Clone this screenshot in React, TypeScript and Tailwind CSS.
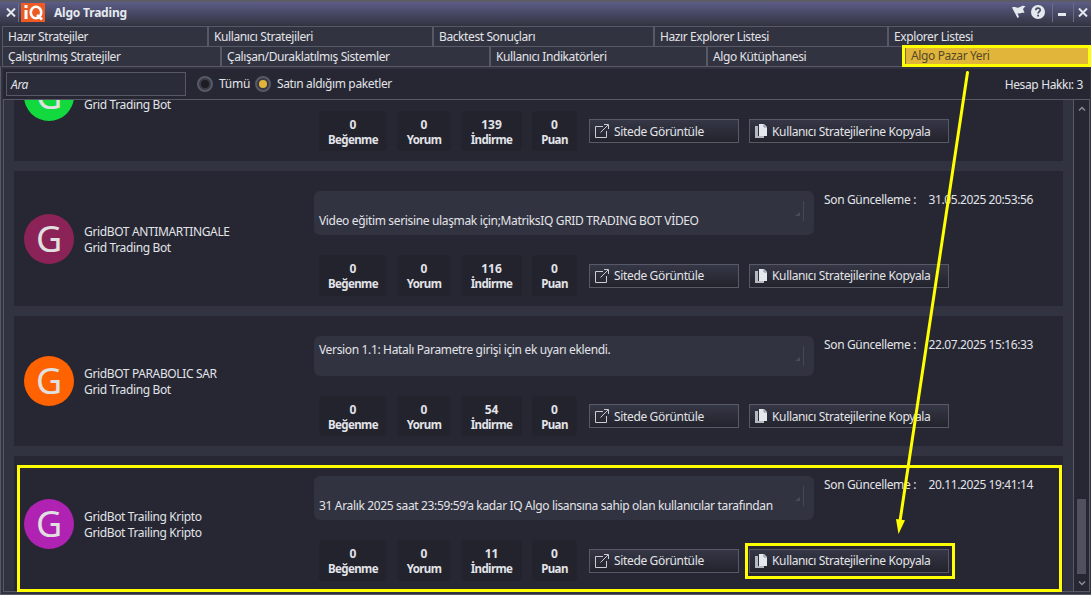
import { ReactNode } from 'react'
import clsx from 'clsx'

const topTabs = [
  { label: 'Hazır Stratejiler', width: 'w-[206px] border-r-2' },
  { label: 'Kullanıcı Stratejileri', width: 'w-[225px] border-r-2' },
  { label: 'Backtest Sonuçları', width: 'w-[221px] border-r-2' },
  { label: 'Hazır Explorer Listesi', width: 'w-[234px] border-r-2' },
  { label: 'Explorer Listesi', width: 'flex-1' },
]

const bottomTabs = [
  { label: 'Çalıştırılmış Stratejiler', width: 'w-[219px] border-r-2' },
  { label: 'Çalışan/Duraklatılmış Sistemler', width: 'w-[269px] border-r-2' },
  { label: 'Kullanıcı Indikatörleri', width: 'w-[217px] border-r-2' },
  { label: 'Algo Kütüphanesi', width: 'w-[194px]' },
]

type Bot = {
  id: number
  name: string
  group: string
  color: string
  description: string
  downloads: string
  updated: string
  tall: boolean
}

const bots: Bot[] = [
  {
    id: 1,
    name: '',
    group: 'Grid Trading Bot',
    color: 'bg-[#12d93e]',
    description: '',
    downloads: '139',
    updated: '',
    tall: false,
  },
  {
    id: 2,
    name: 'GridBOT ANTIMARTINGALE',
    group: 'Grid Trading Bot',
    color: 'bg-[#8c2358]',
    description: 'Video eğitim serisine ulaşmak için;MatriksIQ GRID TRADING BOT VİDEO',
    downloads: '116',
    updated: '31.05.2025 20:53:56',
    tall: true,
  },
  {
    id: 3,
    name: 'GridBOT PARABOLIC SAR',
    group: 'Grid Trading Bot',
    color: 'bg-[#ff6200]',
    description: 'Version 1.1: Hatalı Parametre girişi için ek uyarı eklendi.',
    downloads: '54',
    updated: '22.07.2025 15:16:33',
    tall: false,
  },
  {
    id: 4,
    name: 'GridBot Trailing Kripto',
    group: 'GridBot Trailing Kripto',
    color: 'bg-[#b022b2]',
    description: '31 Aralık 2025 saat 23:59:59’a kadar IQ Algo lisansına sahip olan kullanıcılar tarafından',
    downloads: '11',
    updated: '20.11.2025 19:41:14',
    tall: true,
  },
]

function TitleBar() {
  return (
    <div className="flex h-[23px] shrink-0 items-center bg-linear-to-b from-[#5c5c87] to-[#343543] text-[#e4e9ee]">
      <svg className="mb-[2px] ml-[6px]" width="10" height="9" viewBox="0 0 10 9">
        <path d="M1 .5 9 8.5M9 .5 1 8.5" stroke="currentColor" strokeWidth="2" />
      </svg>
      <div className="mb-[3px] ml-[2px] h-[19px] w-px bg-[#6c6c84]" />
      <div className="mb-[3px] ml-[2px] flex h-[19px] w-6 items-center justify-center bg-[#ee5a24]">
        <svg width="21" height="17" viewBox="0 0 21 17" fill="none" stroke="#fff">
          <path d="M3 6v9" strokeWidth="3" />
          <path d="M1.5 2.5h3" strokeWidth="3" />
          <ellipse cx="13" cy="8.5" rx="5.2" ry="5.7" strokeWidth="2.6" />
          <path d="m14 11 5 4.5" strokeWidth="2.6" />
        </svg>
      </div>
      <span className="mb-[2px] ml-[9px] text-[12px] font-bold leading-none tracking-[-0.2px]">Algo Trading</span>
      <div className="ml-auto flex h-full items-center">
        <svg className="mb-[3px]" width="14" height="14" viewBox="0 0 14 14" fill="currentColor">
          <path d="M0 2.5C3 1 5 4 8 2s4-1 5.500-1L11 4l1.500 4C9 7 9 9.500 5.500 8L7 12l-1.500 1Z" />
        </svg>
        <svg className="mb-[3px] ml-[5px]" width="14" height="14" viewBox="0 0 14 14">
          <circle cx="7" cy="7" r="7" fill="currentColor" />
          <path d="M4.800 5.300C4.900 2.500 9.300 2.600 9.200 5.100 9.100 6.700 7.100 6.600 7.100 8.600" fill="none" stroke="#484963" strokeWidth="1.700" />
          <path d="M6.200 9.800h1.800v1.700H6.200z" fill="#484963" />
        </svg>
        <div className="mb-[3px] ml-[7px] h-[19px] w-px bg-[#6c6c84]" />
        <div className="ml-[5px] mt-[2px] h-[3px] w-2 bg-[#e4e9ee]" />
        <div className="mb-[3px] ml-[7px] h-[19px] w-px bg-[#6c6c84]" />
        <svg className="mb-[2px] ml-[4px] mr-[3px]" width="10" height="9" viewBox="0 0 10 9">
          <path d="M1 .5 9 8.5M9 .5 1 8.5" stroke="currentColor" strokeWidth="2" />
        </svg>
      </div>
    </div>
  )
}

function Tab({ label, width }: { label: string; width: string }) {
  return (
    <div className={clsx('flex h-[19px] shrink-0 items-center border-[#585966] pl-[5px] pt-px tracking-[-0.4px]', width)}>
      {label}
    </div>
  )
}

function Radio({ checked }: { checked?: boolean }) {
  return (
    <div className="flex size-4 items-center justify-center rounded-full border-2 border-[#585966] bg-[#383947]">
      <div className={clsx('size-2 rounded-full', checked ? 'bg-[#e0b53a]' : 'bg-[#1c1c22]')} />
    </div>
  )
}

function Stat({ value, label, width }: { value: string; label: string; width: string }) {
  return (
    <div className={clsx('flex h-full flex-col items-center justify-center rounded bg-[#23232e] pt-px font-bold leading-[15px]', width)}>
      <span className="text-[12px] tracking-normal">{value}</span>
      <span className="whitespace-nowrap text-[11.500px] tracking-[-0.6px]">{label}</span>
    </div>
  )
}

function Button({ width, icon, children }: { width: string; icon: ReactNode; children: ReactNode }) {
  return (
    <button
      className={clsx(
        'flex h-6 items-center whitespace-nowrap border border-[#585966] bg-linear-to-b from-[#363746] to-[#23232d] pl-[5px] tracking-[-0.35px]',
        width,
      )}
    >
      {icon}
      <span className="pt-px">{children}</span>
    </button>
  )
}

function OpenIcon() {
  return (
    <svg className="mr-[5px]" width="14" height="14" viewBox="0 0 14 14" fill="none" stroke="#c9cdd3">
      <path d="M8 2.500H.500v11h11V7" />
      <path d="M5.500 8.500 13 1M9 .500h4.500V5" />
    </svg>
  )
}

function CopyIcon() {
  return (
    <svg className="mr-[4px]" width="13" height="14" viewBox="0 0 13 14">
      <path d="M0 2h3v10h6v2H0Z" fill="#b4b8c0" />
      <path d="M4 0h5l3 3v9H4Z" fill="#e4e9ee" />
      <path d="M9 0v3h3" fill="none" stroke="#8b8c97" />
    </svg>
  )
}

function BotCard({ bot }: { bot: Bot }) {
  return (
    <div className={clsx('flex shrink-0 bg-[#262733]', bot.tall ? 'h-[135px]' : 'h-[130px]')}>
      <div className="flex w-[300px] shrink-0 items-center pl-[10px]">
        <div className={clsx('flex size-[50px] shrink-0 items-center justify-center rounded-full text-[36px] leading-none text-[#e0e0e0]', bot.color)}>
          G
        </div>
        <div className="ml-[10px] pt-[2px] leading-4">
          <p className="min-h-4">{bot.name}</p>
          <p>{bot.group}</p>
        </div>
      </div>
      <div className="flex flex-1 flex-col pb-[10px] pt-5">
        <div className="flex">
          <div
            className={clsx(
              'flex w-[500px] shrink-0 justify-between rounded-md bg-[#323341] pl-[5px]',
              bot.tall ? 'h-[44px] pt-[22px]' : 'h-10 pt-[6px]',
            )}
          >
            <p className="whitespace-nowrap leading-4 tracking-[-0.345px]">{bot.description}</p>
            <div className={clsx('mr-[10px] flex h-5 w-[9px] items-center border-r border-[#474855]', bot.tall ? '-mt-[12px]' : 'mt-[4px]')}>
              <svg className="mt-[5px]" width="5" height="4" viewBox="0 0 5 4">
                <path d="M0 4 5 0v4Z" fill="#4a4b58" />
              </svg>
            </div>
          </div>
          <span className="ml-[10px] w-[104.5px] leading-[18px]">Son Güncelleme :</span>
          <span className="leading-[18px] tracking-[-0.4px]">{bot.updated}</span>
        </div>
        <div className="mt-5 flex min-h-0 flex-1 items-center gap-[10px] pl-[5px]">
          <Stat value="0" label="Beğenme" width="w-[68px]" />
          <Stat value="0" label="Yorum" width="w-[54px]" />
          <Stat value={bot.downloads} label="İndirme" width="w-[61px]" />
          <Stat value="0" label="Puan" width="w-[45px]" />
          <div className="ml-[2px] flex gap-[10px]">
            <Button width="w-[150px]" icon={<OpenIcon />}>
              Sitede Görüntüle
            </Button>
            <Button width="w-[200px]" icon={<CopyIcon />}>
              Kullanıcı Stratejilerine Kopyala
            </Button>
          </div>
        </div>
      </div>
    </div>
  )
}

function Scrollbar() {
  return (
    <div className="flex w-[16px] shrink-0 flex-col items-center border-l border-[#585966] bg-[#262733]">
      <svg className="mt-[6px]" width="8" height="5" viewBox="0 0 8 5" fill="none" stroke="#8a8b96" strokeWidth="1.500">
        <path d="M1 4.500 4 1.500 7 4.500" />
      </svg>
      <div className="mt-auto h-[75px] w-[9px] bg-[#50515f]" />
      <svg className="mb-[5px] mt-[7px]" width="8" height="5" viewBox="0 0 8 5" fill="none" stroke="#8a8b96" strokeWidth="1.500">
        <path d="M1 .500 4 3.500 7 .500" />
      </svg>
    </div>
  )
}

// Tutorial markings drawn over the window
function Annotations() {
  return (
    <>
      <div className="absolute left-[17px] top-[465px] h-[127px] w-[1045px] border-[3px] border-[#ffff00]" />
      <div className="absolute left-[745px] top-[543px] h-[36px] w-[210px] border-[3px] border-[#ffff00]" />
      <svg className="absolute left-0 top-0" width="1091" height="595" viewBox="0 0 1091 595">
        <path d="M967.500 72.500 900 521" stroke="#ffff00" strokeWidth="3" strokeLinecap="round" />
        <path d="m898.500 534-2.500-15 9 1.300Z" fill="#ffff00" />
      </svg>
    </>
  )
}

export default function App() {
  return (
    <div className="relative flex h-[595px] w-[1091px] flex-col overflow-hidden border-t-2 border-[#5c5c66] bg-[#323341] font-['Noto_Sans',sans-serif] text-[12px] tracking-[-0.36px] text-[#e2e4e8]">
      <TitleBar />
      <div className="ml-[2px] mt-px shrink-0 border-l border-t border-[#585966]">
        <div className="flex">
          {topTabs.map((tab) => (
            <Tab key={tab.label} {...tab} />
          ))}
        </div>
        <div className="flex h-[21px] border-y border-[#585966]">
          {bottomTabs.map((tab) => (
            <Tab key={tab.label} {...tab} />
          ))}
          <div className="z-10 -mt-[2px] flex h-[22px] flex-1 items-center border-[3px] border-[#ffff00] bg-[#e0b53a] text-[#55492c]">
            <div className="h-full w-px bg-[#7b6a3d]" />
            <span className="ml-[5px]">Algo Pazar Yeri</span>
          </div>
        </div>
      </div>
      <div className="ml-[3px] mr-px mt-[2px] flex h-[30px] shrink-0 items-center bg-[#262733]">
        <div className="ml-[3px] flex h-6 w-[180px] items-center border border-[#585966] bg-[#2b2c39] pl-1 pt-px italic">Ara</div>
        <div className="ml-[11px]">
          <Radio />
        </div>
        <span className="ml-[6px] w-[30px] whitespace-nowrap tracking-[-0.25px]">Tümü</span>
        <div className="ml-[6px]">
          <Radio checked />
        </div>
        <span className="ml-[6px]">Satın aldığım paketler</span>
        <span className="ml-auto mr-[7px] mt-px">Hesap Hakkı: 3</span>
      </div>
      <div className="ml-[3px] mr-px flex h-[493px] shrink-0 border border-[#585966]">
        <div className="flex flex-1 flex-col justify-end gap-[10px] overflow-hidden pl-[10px] pr-[10px]">
          {bots.map((bot) => (
            <BotCard key={bot.id} bot={bot} />
          ))}
        </div>
        <Scrollbar />
      </div>
      <div className="mt-auto h-px shrink-0 bg-[#585966]" />
      <div className="absolute left-0 top-[64px] h-[530px] w-px bg-[#585966]" />
      <div className="absolute -top-[2px] left-0">
        <Annotations />
      </div>
    </div>
  )
}
